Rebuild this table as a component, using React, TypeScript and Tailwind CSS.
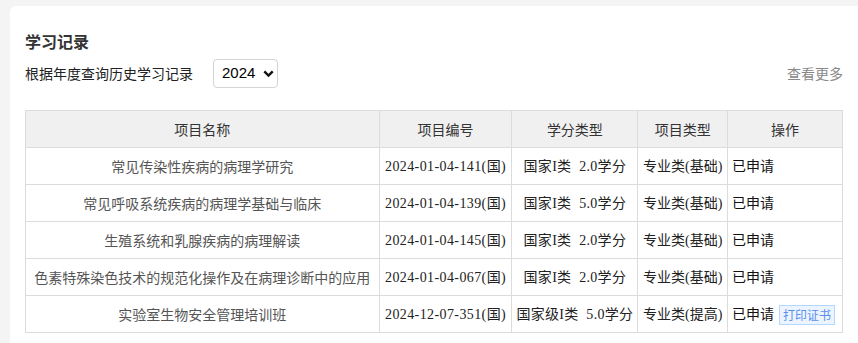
import { useState } from "react";

type Record = {
  name: string;
  code: string;
  credit: string;
  kind: string;
  status: string;
  printable?: boolean;
};

const records: Record[] = [
  { name: "常见传染性疾病的病理学研究", code: "2024-01-04-141(国)", credit: "国家I类 2.0学分", kind: "专业类(基础)", status: "已申请" },
  { name: "常见呼吸系统疾病的病理学基础与临床", code: "2024-01-04-139(国)", credit: "国家I类 5.0学分", kind: "专业类(基础)", status: "已申请" },
  { name: "生殖系统和乳腺疾病的病理解读", code: "2024-01-04-145(国)", credit: "国家I类 2.0学分", kind: "专业类(基础)", status: "已申请" },
  { name: "色素特殊染色技术的规范化操作及在病理诊断中的应用", code: "2024-01-04-067(国)", credit: "国家I类 2.0学分", kind: "专业类(基础)", status: "已申请" },
  { name: "实验室生物安全管理培训班", code: "2024-12-07-351(国)", credit: "国家级I类 5.0学分", kind: "专业类(提高)", status: "已申请", printable: true },
];

export default function App() {
  const [year, setYear] = useState("2024");

  return (
    <div className="min-h-screen bg-[#f4f4f4] pl-[10px] pt-[6px] font-['Noto_Sans_CJK_SC',sans-serif]">
      <div className="bg-white rounded-l-md pl-[15px] pr-[15px] pt-[23px] pb-[20px]">
        {/* Title */}
        <h2 className="text-[16px] leading-[24px] font-bold text-[#333]">学习记录</h2>

        {/* Filter row */}
        <div className="mt-[6px] flex items-center h-[29px]">
          <span className="text-[14px] text-[#222]">根据年度查询历史学习记录</span>
          <div className="relative ml-[20px] w-[65px] h-[29px]">
            <select
              value={year}
              onChange={(e) => setYear(e.target.value)}
              className="appearance-none w-full h-full border border-[#d4d4d4] rounded-[4px] bg-white pl-[8px] text-[15px] text-black font-['Liberation_Sans',sans-serif] outline-none"
            >
              <option>2024</option>
              <option>2023</option>
              <option>2022</option>
            </select>
            <svg
              className="pointer-events-none absolute right-[4px] top-[11px]"
              width="11"
              height="8"
              viewBox="0 0 11 8"
            >
              <path d="M1.3 1.3 L5.5 5.5 L9.7 1.3" fill="none" stroke="#111" strokeWidth="2.4" />
            </svg>
          </div>
          <a className="ml-auto text-[14px] text-[#888] cursor-pointer">查看更多</a>
        </div>

        {/* Records table */}
        <table className="mt-[22px] w-[818px] border-collapse text-[14px] font-['Liberation_Serif','Noto_Sans_CJK_SC',serif] text-[#222]">
          <thead>
            <tr className="bg-[#f0f0f0] text-[#333]">
              <th className="w-[354px] h-[37px] border border-[#dcdcdc] font-normal font-['Noto_Sans_CJK_SC',sans-serif]">项目名称</th>
              <th className="w-[133px] border border-[#dcdcdc] font-normal font-['Noto_Sans_CJK_SC',sans-serif]">项目编号</th>
              <th className="w-[126px] border border-[#dcdcdc] font-normal font-['Noto_Sans_CJK_SC',sans-serif]">学分类型</th>
              <th className="w-[90px] border border-[#dcdcdc] font-normal font-['Noto_Sans_CJK_SC',sans-serif]">项目类型</th>
              <th className="w-[115px] border border-[#dcdcdc] font-normal font-['Noto_Sans_CJK_SC',sans-serif]">操作</th>
            </tr>
          </thead>
          <tbody>
            {records.map((r) => (
              <tr key={r.code}>
                <td className="h-[37px] border border-[#dcdcdc] text-center text-[#555] font-['Noto_Sans_CJK_SC',sans-serif] whitespace-nowrap">{r.name}</td>
                <td className="border border-[#dcdcdc] text-center whitespace-nowrap tracking-[0.4px]">{r.code}</td>
                <td className="border border-[#dcdcdc] text-center whitespace-nowrap tracking-[0.3px] [word-spacing:4px]">{r.credit}</td>
                <td className="border border-[#dcdcdc] text-center whitespace-nowrap">{r.kind}</td>
                <td className="border border-[#dcdcdc] pl-[4px] whitespace-nowrap">
                  <span className="font-['Noto_Sans_CJK_SC',sans-serif] text-[14px] text-[#111]">{r.status}</span>
                  {r.printable && (
                    <button className="ml-[5px] px-[3px] h-[20px] leading-[18px] align-middle border border-[#b3d8ff] bg-[#ecf5ff] text-[#5b8def] text-[12px] font-['Noto_Sans_CJK_SC',sans-serif]">
                      打印证书
                    </button>
                  )}
                </td>
              </tr>
            ))}
          </tbody>
        </table>
      </div>
    </div>
  );
}
